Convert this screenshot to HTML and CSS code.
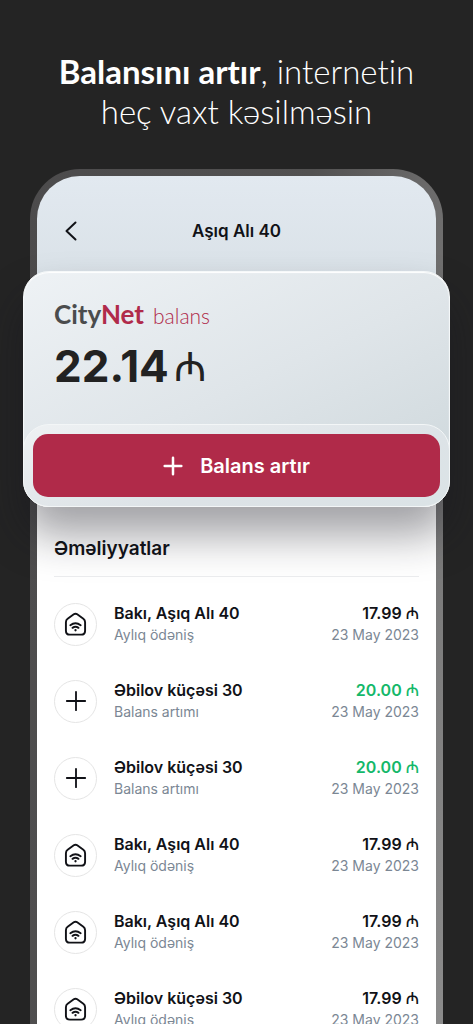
FILE: index.html
```html
<!DOCTYPE html>
<html lang="az">
<head>
<meta charset="utf-8">
<meta name="viewport" content="width=device-width, initial-scale=1">
<title>CityNet balans</title>
<link rel="stylesheet" href="styles.css">
</head>
<body>
<svg class="sprite" aria-hidden="true">
  <symbol id="home" viewBox="0 0 24 26">
    <path d="M10.2 2.4Q12 1.1 13.8 2.4L20.2 7.1Q22 8.4 22 10.6V19.4Q22 23.6 17.8 23.6H6.2Q2 23.6 2 19.4V10.6Q2 8.4 3.8 7.1Z"/>
    <path d="M6.6 13.7Q12 9.6 17.4 13.7M8.9 16.5Q12 14.3 15.1 16.5"/>
    <circle class="dot" cx="12" cy="19" r="1.2"/>
  </symbol>
  <symbol id="plus" viewBox="0 0 24 24"><path d="M12 2V22M2 12H22"/></symbol>
</svg>
<main class="page">
  <h1 class="headline"><strong>Balansını artır</strong>, internetin<br>heç vaxt kəsilməsin</h1>
  <div class="phone">
    <div class="screen">
      <header class="topbar">
        <button class="back" type="button" aria-label="Geri"><svg viewBox="0 0 12 20"><path d="M10.5 1.5L1.5 10L10.5 18.5"/></svg></button>
        <h2 class="address">Aşıq Alı 40</h2>
      </header>
      <section class="card">
        <div class="balance">
          <p class="brand"><span class="brand-name"><span class="brand-city">City</span>Net</span><span class="brand-sub">balans</span></p>
          <p class="amount">22.14<span class="manat">₼</span></p>
        </div>
        <div class="action">
          <button class="topup" type="button"><svg class="topup-icon"><use href="#plus"/></svg>Balans artır</button>
        </div>
      </section>
      <section class="history">
        <h3 class="history-title">Əməliyyatlar</h3>
        <ul class="list">
          <li class="row"><span class="badge"><svg class="icon-home"><use href="#home"/></svg></span><div class="info"><p class="name">Bakı, Aşıq Alı 40</p><p class="note">Aylıq ödəniş</p></div><div class="info sum"><p class="name">17.99 <span class="sign">₼</span></p><p class="note">23 May 2023</p></div></li>
          <li class="row"><span class="badge"><svg class="icon-plus"><use href="#plus"/></svg></span><div class="info"><p class="name">Əbilov küçəsi 30</p><p class="note">Balans artımı</p></div><div class="info sum"><p class="name income">20.00 <span class="sign">₼</span></p><p class="note">23 May 2023</p></div></li>
          <li class="row"><span class="badge"><svg class="icon-plus"><use href="#plus"/></svg></span><div class="info"><p class="name">Əbilov küçəsi 30</p><p class="note">Balans artımı</p></div><div class="info sum"><p class="name income">20.00 <span class="sign">₼</span></p><p class="note">23 May 2023</p></div></li>
          <li class="row"><span class="badge"><svg class="icon-home"><use href="#home"/></svg></span><div class="info"><p class="name">Bakı, Aşıq Alı 40</p><p class="note">Aylıq ödəniş</p></div><div class="info sum"><p class="name">17.99 <span class="sign">₼</span></p><p class="note">23 May 2023</p></div></li>
          <li class="row"><span class="badge"><svg class="icon-home"><use href="#home"/></svg></span><div class="info"><p class="name">Bakı, Aşıq Alı 40</p><p class="note">Aylıq ödəniş</p></div><div class="info sum"><p class="name">17.99 <span class="sign">₼</span></p><p class="note">23 May 2023</p></div></li>
          <li class="row"><span class="badge"><svg class="icon-home"><use href="#home"/></svg></span><div class="info"><p class="name">Əbilov küçəsi 30</p><p class="note">Aylıq ödəniş</p></div><div class="info sum"><p class="name">17.99 <span class="sign">₼</span></p><p class="note">23 May 2023</p></div></li>
        </ul>
      </section>
    </div>
  </div>
</main>
</body>
</html>
```

FILE: styles.css
```css
* { box-sizing: border-box; }
body, h1, h2, h3, p, ul { margin: 0; padding: 0; }
body { background: #242424; color: #111217; font-family: Inter, "Noto Sans", sans-serif; }
button { border: 0; padding: 0; font: inherit; cursor: pointer; }
svg { display: block; fill: none; stroke: currentColor; stroke-linecap: round; stroke-linejoin: round; }
.sprite { display: none; }
.dot { fill: currentColor; stroke: none; }

.page { height: 100vh; overflow: hidden; padding: 51px 30px 0; display: flex; flex-direction: column; }
.headline { color: #fff; font: 300 33px/40px Lato, "Noto Sans", sans-serif; font-variant-ligatures: none; text-align: center; white-space: nowrap; }
.headline strong { font-weight: 700; }

.phone { flex: none; margin-top: 38px; padding: 7px 7px 0; border-radius: 50px 50px 0 0; background: linear-gradient(100deg, #4c4b4c 0%, #525151 50%, #8c8c8c 100%); }
.screen { border-radius: 43px 43px 0 0; background: linear-gradient(#e2e9f0, #d9e1e7 110px, #fff 260px); }
.topbar { height: 95px; padding: 15px 24px 0; display: grid; grid-template-columns: 20px 1fr 20px; align-items: center; }
.back { width: 20px; height: 30px; display: grid; place-items: center; background: none; color: #111217; }
.back svg { width: 12px; height: 20px; stroke-width: 2; }
.address { font-size: 17px; line-height: 24px; font-weight: 600; text-align: center; }

.card { margin: 0 -14px; border-radius: 26px; border: 1px solid #f5f8f9; background: linear-gradient(155deg, #eef2f5 0%, #dfe5e9 50%, #ccd6da 100%); box-shadow: 0 28px 44px rgba(20, 20, 30, 0.4), inset 0 1px 1px #fff; }
.balance { height: 152px; padding: 27px 30px 0; }
.brand { display: flex; align-items: baseline; gap: 9px; font: 300 21px/30px Lato, "Noto Sans", sans-serif; color: #b02a4a; }
.brand-name { font-size: 26px; font-weight: 700; }
.brand-city { color: #4b4c4d; }
.amount { margin-top: 8px; display: flex; gap: 5px; font-size: 44px; line-height: 54px; font-weight: 700; color: #222; }
.manat { font-family: "Open Sans", "Noto Sans", sans-serif; font-weight: 400; font-size: 40px; }
.action { padding: 9px; margin: 0 -1px -1px; border-radius: 26px; border: 1px solid #f3f6f7; background: linear-gradient(165deg, #eef1f3, #dde3e7 60%, #dbe3e6); }
.topup { width: 100%; height: 63px; display: flex; align-items: center; justify-content: center; gap: 17px; border-radius: 15px; background: #b02a49; color: #fff; font-size: 20px; line-height: 28px; font-weight: 600; }
.topup-icon { width: 20px; height: 20px; stroke-width: 3; }

.history { padding: 29px 17px 0; }
.history-title { padding-bottom: 15px; border-bottom: 1px solid #eaebed; font-size: 19px; line-height: 25px; font-weight: 600; }
.list { padding-top: 25px; display: grid; gap: 33px; list-style: none; }
.row { display: flex; align-items: center; gap: 17px; }
.badge { flex: none; width: 43px; height: 43px; display: grid; place-items: center; border: 1px solid #e5e5e5; border-radius: 50%; }
.icon-home { width: 23px; height: 25px; stroke-width: 2; }
.icon-plus { width: 22px; height: 22px; stroke-width: 2; }
.info { flex: 1; white-space: nowrap; }
.sum { flex: none; text-align: right; }
.name { font-size: 16px; line-height: 22px; font-weight: 600; }
.note { font-size: 14px; line-height: 22px; color: #7b8794; }
.income { color: #14b86a; }
.sign { font-family: "Open Sans", "Noto Sans", sans-serif; font-size: 16px; line-height: 20px; font-weight: 500; }
```
